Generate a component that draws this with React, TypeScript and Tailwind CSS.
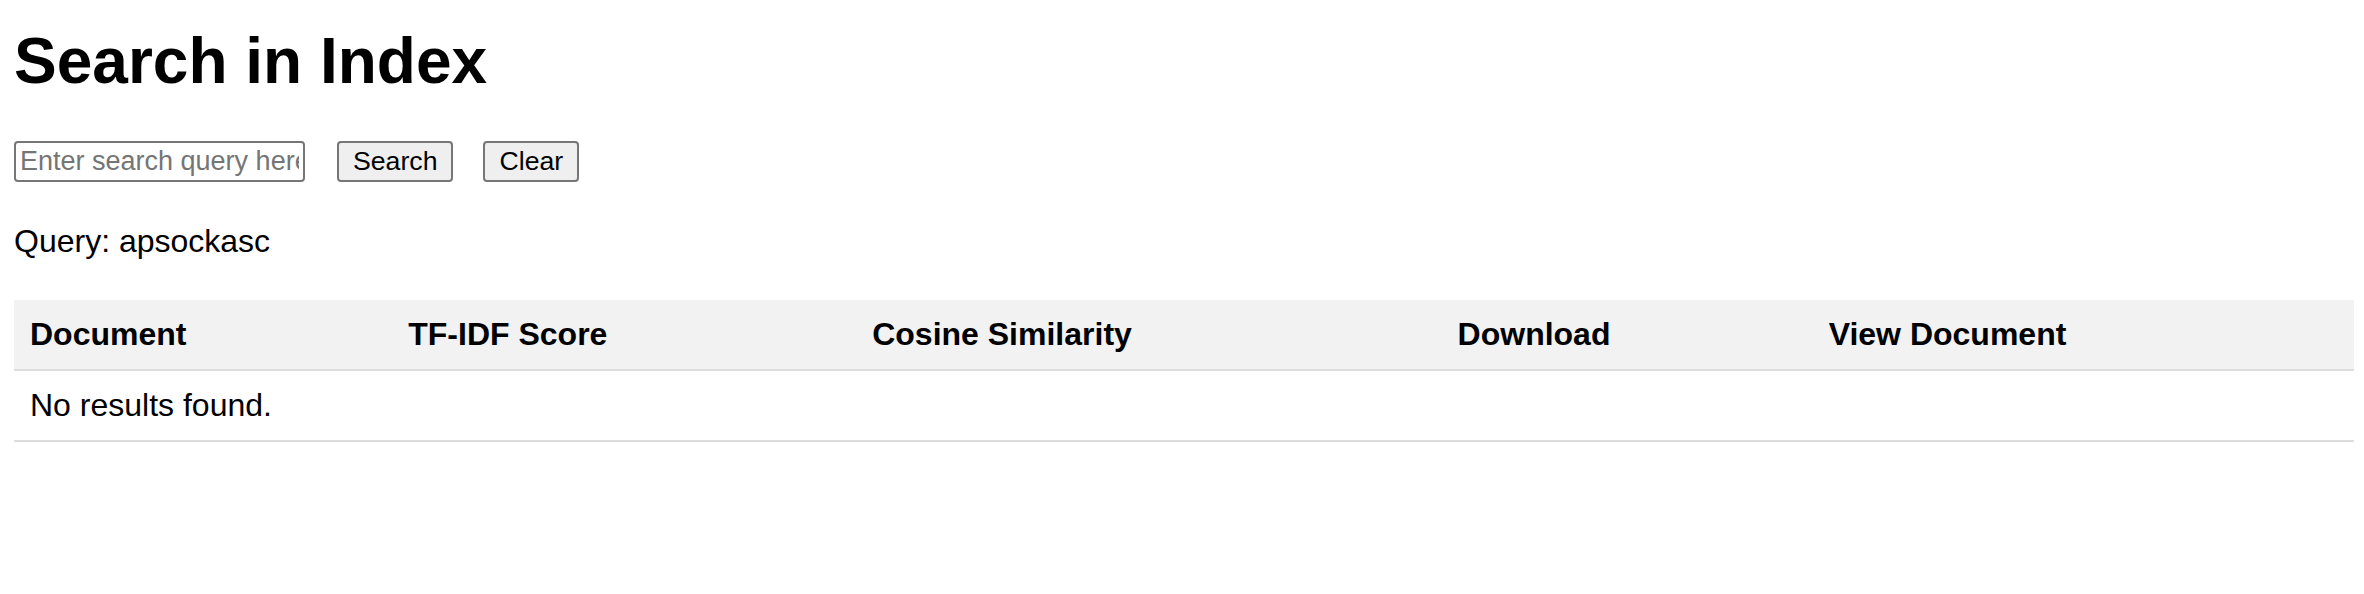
import React, { useState } from "react";

interface Result {
  document: string;
  tfidf: number;
  cosine: number;
  url: string;
}

const headers = ["Document", "TF-IDF Score", "Cosine Similarity", "Download", "View Document"];

const App: React.FC = () => {
  const [input, setInput] = useState("");
  const [query, setQuery] = useState("apsockasc");
  const [results, setResults] = useState<Result[]>([]);

  const search = () => {
    setQuery(input);
    setResults([]);
  };

  const clear = () => {
    setInput("");
    setQuery("");
    setResults([]);
  };

  return (
    <div className="min-h-screen bg-white text-black pl-[14px] pr-[10px] font-['Liberation_Sans',Arial,sans-serif]">
      <h1 className="pt-[25px] text-[64px] leading-[72px] font-bold">Search in Index</h1>

      <div className="mt-[44px] flex items-center">
        <input
          type="text"
          value={input}
          onChange={(e) => setInput(e.target.value)}
          placeholder="Enter search query here"
          className="w-[291px] h-[41px] px-[4px] border-2 border-[#767676] rounded-[4px] text-[27px] text-black placeholder:text-[#757575] outline-none"
        />
        <button
          onClick={search}
          className="ml-[32px] h-[41px] px-[14px] border-2 border-[#767676] rounded-[4px] bg-[#efefef] text-[26.67px] leading-[31px] text-black"
        >
          Search
        </button>
        <button
          onClick={clear}
          className="ml-[30px] h-[41px] px-[14px] border-2 border-[#767676] rounded-[4px] bg-[#efefef] text-[26.67px] leading-[31px] text-black"
        >
          Clear
        </button>
      </div>

      <p className="mt-[41px] text-[32px] leading-[37px]">Query: {query}</p>

      <table className="mt-[40px] w-full border-collapse text-[32px] leading-[37px]">
        <thead>
          <tr className="bg-[#f2f2f2]">
            {headers.map((h) => (
              <th key={h} className="p-[16px] text-left font-bold border-b-2 border-[#dddddd]">
                {h}
              </th>
            ))}
          </tr>
        </thead>
        <tbody>
          {results.length === 0 ? (
            <tr>
              <td colSpan={5} className="p-[16px] text-left border-b-2 border-[#dddddd]">
                No results found.
              </td>
            </tr>
          ) : (
            results.map((r) => (
              <tr key={r.document}>
                <td className="p-[16px] border-b-2 border-[#dddddd]">{r.document}</td>
                <td className="p-[16px] border-b-2 border-[#dddddd]">{r.tfidf.toFixed(4)}</td>
                <td className="p-[16px] border-b-2 border-[#dddddd]">{r.cosine.toFixed(4)}</td>
                <td className="p-[16px] border-b-2 border-[#dddddd]">
                  <a href={r.url}>Download</a>
                </td>
                <td className="p-[16px] border-b-2 border-[#dddddd]">
                  <a href={r.url}>View</a>
                </td>
              </tr>
            ))
          )}
        </tbody>
      </table>
    </div>
  );
};

export default App;
